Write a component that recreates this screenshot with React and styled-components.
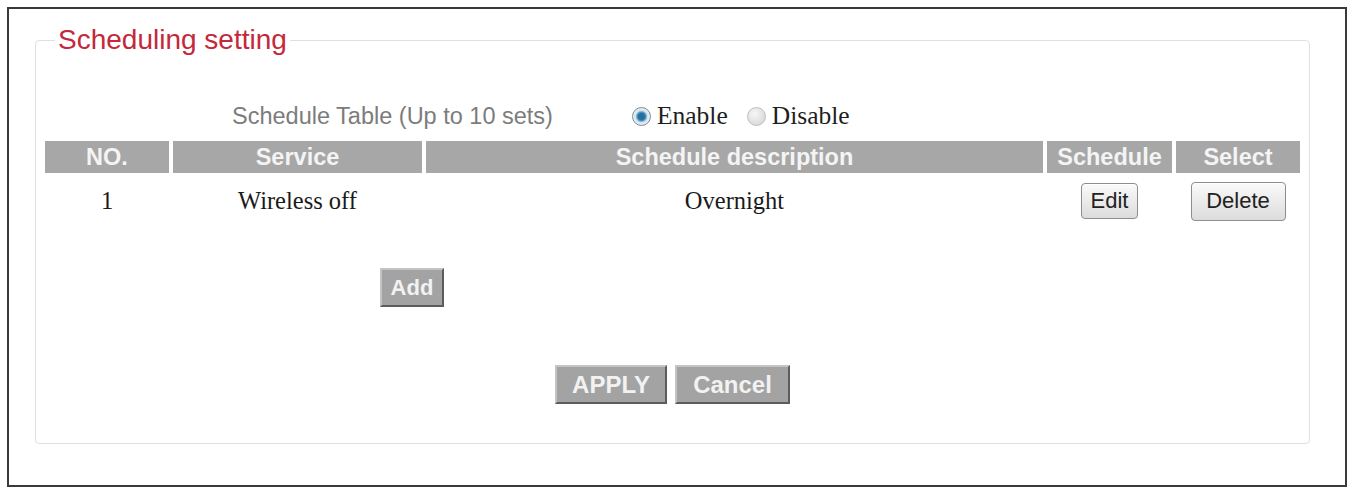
import styled, { createGlobalStyle } from "styled-components";

const GlobalStyle = createGlobalStyle`
  body {
    margin: 0;
    background: #fff;
    font-family: "Liberation Sans", Arial, sans-serif;
  }
`;

// marco exterior de la pagina
const Frame = styled.div`
  margin: 7px;
  width: 1340px;
  height: 480px;
  box-sizing: border-box;
  border: 2px solid #3a3a3a;
  padding: 14px 0 0 26px;
`;

const Fieldset = styled.fieldset`
  width: 1275px;
  box-sizing: border-box;
  margin: 0;
  padding: 0 0 39px 0;
  border: 1px solid #e0e0e0;
  border-radius: 4px;
`;

const Legend = styled.legend`
  margin-left: 19px;
  padding: 0 3px;
  font-size: 28px;
  line-height: 34px;
  color: #c4283a;
`;

const TopRow = styled.div`
  display: flex;
  align-items: center;
  height: 32px;
  margin: 43px 0 9px 196px;
`;

const Caption = styled.span`
  font-size: 23.5px;
  color: #7c7c7c;
  margin-right: 79px;
`;

const RadioLabel = styled.label`
  display: flex;
  align-items: center;
  gap: 6px;
  margin-right: 19px;
  font-family: "Liberation Serif", "Times New Roman", serif;
  font-size: 25.5px;
  color: #1e1e1e;
`;

// circulo del radio, con punto azul si esta marcado
const Radio = styled.span`
  width: 19px;
  height: 19px;
  border-radius: 50%;
  box-sizing: border-box;
  border: 1px solid ${props => (props.checked ? "#7a8a99" : "#bdbdbd")};
  background: ${props =>
    props.checked
      ? "radial-gradient(circle, #2a6f9c 0 3px, #4d9cc9 4.5px, #d7e3ec 6px, #eef2f5 9px)"
      : "radial-gradient(circle at 40% 35%, #f6f6f6, #d2d2d2)"};
`;

const Table = styled.div`
  display: grid;
  grid-template-columns: 124px 249px 617px 125px 124px;
  column-gap: 4px;
  margin: 0 9px;
`;

const HeadCell = styled.div`
  height: 32px;
  background: #a7a7a7;
  color: #f4f4f4;
  font-weight: bold;
  font-size: 23.5px;
  display: flex;
  align-items: center;
  justify-content: center;
`;

const Cell = styled.div`
  height: 56px;
  display: flex;
  align-items: center;
  justify-content: center;
  font-family: "Liberation Serif", "Times New Roman", serif;
  font-size: 24.5px;
  color: #1a1a1a;
`;

const SmallButton = styled.button`
  height: ${props => props.h || 36}px;
  width: ${props => props.w}px;
  padding: 0;
  font-family: "Liberation Sans", Arial, sans-serif;
  font-size: 22px;
  color: #222;
  background: linear-gradient(#fafafa, #dcdcdc);
  border: 1px solid #8d8d8d;
  border-radius: 4px;
  box-shadow: inset 0 1px 0 #fff;
`;

// botones grises con borde en relieve
const GrayButton = styled.button`
  height: 39px;
  width: ${props => props.w}px;
  padding: 0;
  font-family: "Liberation Sans", Arial, sans-serif;
  font-weight: bold;
  font-size: ${props => props.fs || 22}px;
  color: #f2f2f2;
  background: #a3a3a3;
  border: 2px solid;
  border-color: #c4c4c4 #5c5c5c #5c5c5c #c4c4c4;
`;

const AddRow = styled.div`
  margin: 39px 0 0 344px;
`;

const Actions = styled.div`
  display: flex;
  justify-content: center;
  gap: 8px;
  margin-top: 58px;
`;

const columns = ["NO.", "Service", "Schedule description", "Schedule", "Select"];

export default function App() {
  return (
    <>
      <GlobalStyle />
      <Frame>
        <Fieldset>
          <Legend>Scheduling setting</Legend>
          <TopRow>
            <Caption>Schedule Table (Up to 10 sets)</Caption>
            <RadioLabel>
              <Radio checked /> Enable
            </RadioLabel>
            <RadioLabel>
              <Radio /> Disable
            </RadioLabel>
          </TopRow>
          <Table>
            {columns.map(c => (
              <HeadCell key={c}>{c}</HeadCell>
            ))}
            <Cell>1</Cell>
            <Cell>Wireless off</Cell>
            <Cell>Overnight</Cell>
            <Cell>
              <SmallButton w={57}>Edit</SmallButton>
            </Cell>
            <Cell>
              <SmallButton w={95} h={39}>Delete</SmallButton>
            </Cell>
          </Table>
          <AddRow>
            <GrayButton w={64}>Add</GrayButton>
          </AddRow>
          <Actions>
            <GrayButton w={112} fs={24}>APPLY</GrayButton>
            <GrayButton w={115} fs={24}>Cancel</GrayButton>
          </Actions>
        </Fieldset>
      </Frame>
    </>
  );
}
